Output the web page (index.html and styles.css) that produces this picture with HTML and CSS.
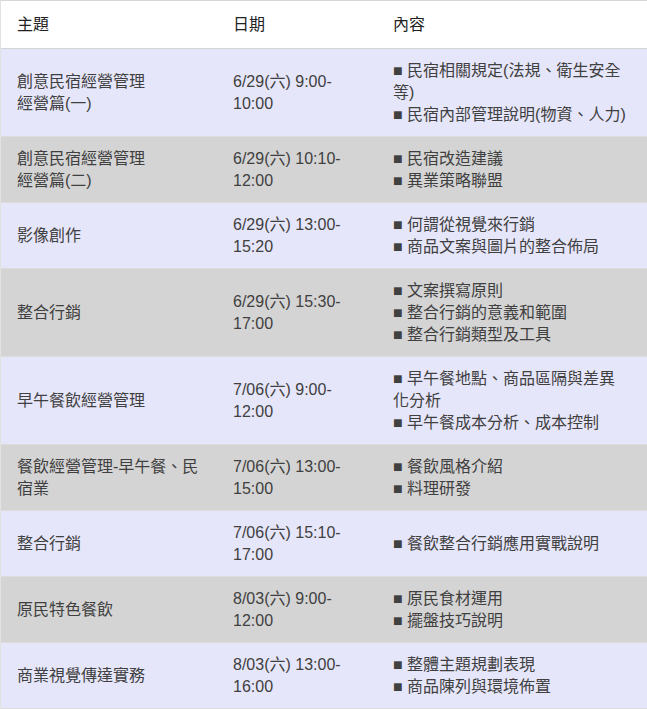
FILE: index.html
```html
<!DOCTYPE html>
<html lang="zh-Hant">
<head>
<meta charset="utf-8">
<title>課程表</title>
<link rel="stylesheet" href="styles.css">
</head>
<body>
<table class="schedule">
  <colgroup>
    <col class="c-topic">
    <col class="c-date">
    <col class="c-content">
  </colgroup>
  <thead>
    <tr class="head-row">
      <th>主題</th>
      <th>日期</th>
      <th>內容</th>
    </tr>
  </thead>
  <tbody>
    <tr class="row-a">
      <td>創意民宿經營管理<br>經營篇(一)</td>
      <td>6/29(六) 9:00-<br>10:00</td>
      <td>■ 民宿相關規定(法規、衛生安全等)<br>■ 民宿內部管理說明(物資、人力)</td>
    </tr>
    <tr class="row-b">
      <td>創意民宿經營管理<br>經營篇(二)</td>
      <td>6/29(六) 10:10-<br>12:00</td>
      <td>■ 民宿改造建議<br>■ 異業策略聯盟</td>
    </tr>
    <tr class="row-a">
      <td>影像創作</td>
      <td>6/29(六) 13:00-<br>15:20</td>
      <td>■ 何謂從視覺來行銷<br>■ 商品文案與圖片的整合佈局</td>
    </tr>
    <tr class="row-b">
      <td>整合行銷</td>
      <td>6/29(六) 15:30-<br>17:00</td>
      <td>■ 文案撰寫原則<br>■ 整合行銷的意義和範圍<br>■ 整合行銷類型及工具</td>
    </tr>
    <tr class="row-a">
      <td>早午餐飲經營管理</td>
      <td>7/06(六) 9:00-<br>12:00</td>
      <td>■ 早午餐地點、商品區隔與差異化分析<br>■ 早午餐成本分析、成本控制</td>
    </tr>
    <tr class="row-b">
      <td>餐飲經營管理-早午餐、民宿業</td>
      <td>7/06(六) 13:00-<br>15:00</td>
      <td>■ 餐飲風格介紹<br>■ 料理研發</td>
    </tr>
    <tr class="row-a">
      <td>整合行銷</td>
      <td>7/06(六) 15:10-<br>17:00</td>
      <td>■ 餐飲整合行銷應用實戰說明</td>
    </tr>
    <tr class="row-b">
      <td>原民特色餐飲</td>
      <td>8/03(六) 9:00-<br>12:00</td>
      <td>■ 原民食材運用<br>■ 擺盤技巧說明</td>
    </tr>
    <tr class="row-a">
      <td>商業視覺傳達實務</td>
      <td>8/03(六) 13:00-<br>16:00</td>
      <td>■ 整體主題規劃表現<br>■ 商品陳列與環境佈置</td>
    </tr>
  </tbody>
</table>
</body>
</html>
```

FILE: styles.css
```css
html, body {
  margin: 0;
  padding: 0;
  background: #ffffff;
  overflow: hidden;
}

.schedule {
  width: 647px;
  table-layout: fixed;
  border-collapse: separate;
  border-spacing: 0;
  border-top: 1px solid #d6d6d6;
  border-left: 1px solid #e2e2e2;
  font-family: "Liberation Sans", "Noto Sans CJK TC", sans-serif;
  font-size: 16px;
  line-height: 22px;
  color: #404040;
}

.c-topic { width: 216px; }
.c-date { width: 160px; }
.c-content { width: 270px; }

.schedule th {
  text-align: left;
  font-weight: normal;
  color: #222222;
  padding: 13px 16px 12px;
  border-bottom: 1px solid #d4d4d4;
  background: #ffffff;
}

.schedule td {
  padding: 11px 16px 10px;
  vertical-align: middle;
  border-bottom: 1px solid #dcdcdc;
}

.row-a td { background: #e6e6fa; }
.row-b td { background: #d4d4d4; }
```
